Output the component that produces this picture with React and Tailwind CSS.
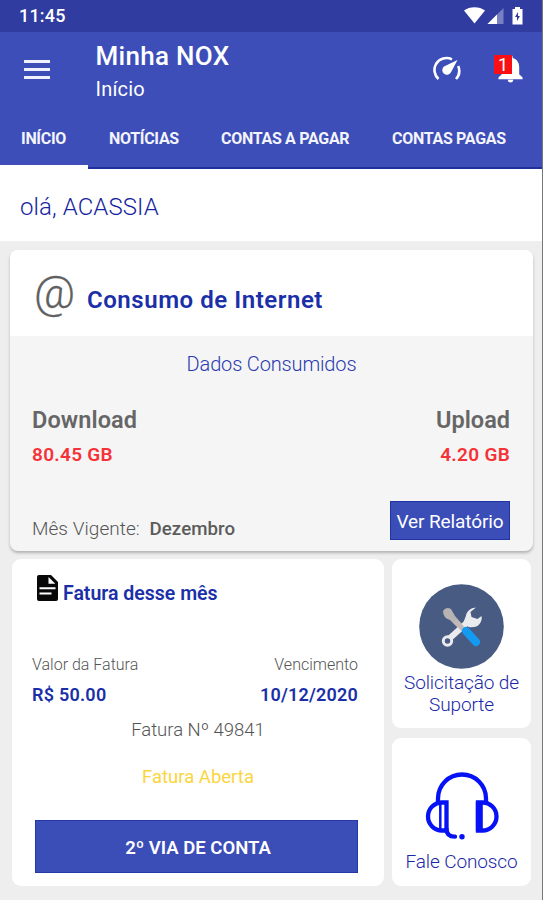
import React from 'react';

const tabs = [
  { label: 'INÍCIO', className: 'w-[88px] pl-[21px]', active: true },
  { label: 'NOTÍCIAS', className: 'w-[111px] pl-[21px]' },
  { label: 'CONTAS A PAGAR', className: 'w-[172px] pl-[22px]' },
  { label: 'CONTAS PAGAS', className: 'w-[171px] pl-[21px]' },
];

const StatusBar = () => (
  <div className="flex h-8 items-center bg-[#303c9f] pl-[19px] text-white">
    <span className="text-[18px] font-medium leading-[34px] tracking-[0.2px]">11:45</span>
    <svg className="ml-auto mr-[18px] h-[18px] w-[60px]" viewBox="0 0 60 18">
      <path d="M0 3.5C5.5-1 15.500-1 21 3.500L10.500 16.500Z" fill="#fff" />
      <path d="M39.500 1v16h-16Z" fill="#7780c2" />
      <path d="M33 7.500V17h-9.500Z" fill="#fff" />
      <path d="M51 0h5v2h2.500v15.500H48.500V2H51Z" fill="#fff" />
      <path d="M54 5l-3 5h2v4l3-5h-2Z" fill="#303c9f" />
    </svg>
  </div>
);

const AppBar = () => (
  <div className="flex h-[76px] text-white">
    <div className="flex w-[95.5px] flex-col gap-[5px] pl-6 pt-[28px]">
      <span className="h-[3px] w-[26px] bg-[#f0f1fa]" />
      <span className="h-[3px] w-[26px] bg-[#f0f1fa]" />
      <span className="h-[3px] w-[26px] bg-[#f0f1fa]" />
    </div>
    <div className="pt-[7px]">
      <h1 className="text-[26px] font-medium leading-[34px] tracking-[0.3px]">Minha NOX</h1>
      <p className="pt-[1px] text-[20px] leading-[30px] tracking-[0.2px]">Início</p>
    </div>
    <svg className="ml-auto mt-[23px] h-[27px] w-[30px]" viewBox="0 0 30 27" fill="none">
      <path d="M6.500 24A12.300 12.300 0 0 1 4 9 12.300 12.300 0 0 1 20 4.300M26.200 11A12.300 12.300 0 0 1 24 24" stroke="#fff" strokeWidth="2.600" />
      <path d="M25.500 5L19 17.300a4.600 4.600 0 1 1-7-5.700Z" fill="#fff" />
    </svg>
    <div className="relative ml-[32px] mr-[19px] mt-[23px] h-[30px] w-[29px]">
      <svg className="absolute left-[4px] top-0 h-[28px] w-[25px]" viewBox="0 0 25 29">
        <path d="M12.500 0c1.300 0 2.200.8 2.200 2v1.200c4.300 1 6.800 4.700 6.800 9.300v7.500l3.500 3.300V25H0v-1.700L3.500 20v-7.500c0-4.600 2.600-8.300 6.800-9.300V2c0-1.200.9-2 2.200-2ZM9.700 25.700h5.600a2.800 2.800 0 0 1-5.600 0Z" fill="#fff" />
      </svg>
      <span className="absolute left-0 top-0 h-[19px] w-[18px] bg-[#fa0f14] text-center text-[18px] leading-[19px]">1</span>
    </div>
  </div>
);

const TabBar = () => (
  <div className="flex h-[61px] text-[16px] font-bold leading-[62px] tracking-[-0.3px] text-[#f3f4fc]">
    {tabs.map((tab) => (
      <div
        key={tab.label}
        className={`${tab.className} flex shrink-0 flex-col whitespace-nowrap border-b-[2px] ${tab.active ? 'border-white' : 'border-[#1e309d]'}`}
      >
        <span className="h-[57px]">{tab.label}</span>
        {tab.active && <span className="-ml-[21px] h-[2px] w-[88px] bg-white" />}
      </div>
    ))}
  </div>
);

const ConsumptionCard = () => (
  <section className="ml-[10px] mt-[9px] h-[301px] w-[523px] overflow-hidden rounded-[8px] bg-[#f5f5f5] shadow-[0_2px_3px_rgba(0,0,0,0.25)]">
    <div className="flex h-[86px] items-center bg-white pl-[24px]">
      <span className="w-[53px] pb-[1px] text-[45px] font-light leading-[60px] text-[#606060] [-webkit-text-stroke:0.3px_#606060]">@</span>
      <h2 className="pt-[13px] text-[24px] font-semibold leading-[30px] tracking-[0.55px] text-[#1a2fa8]">Consumo de Internet</h2>
    </div>
    <p className="pt-[14px] text-center text-[20px] font-light leading-[28px] tracking-[-0.15px] text-[#2a39b0]">Dados Consumidos</p>
    <div className="flex justify-between pl-[22px] pr-[23px] pt-[26px] font-semibold">
      <div>
        <p className="text-[23.5px] leading-[32px] tracking-[0.1px] text-[#666]">Download</p>
        <p className="pt-[3px] text-[19px] leading-[32px] tracking-[0.3px] text-[#f53238]">80.45 GB</p>
      </div>
      <div className="text-right">
        <p className="text-[23.5px] leading-[32px] text-[#666]">Upload</p>
        <p className="pt-[3px] text-[19px] leading-[32px] tracking-[0.3px] text-[#f53238]">4.20 GB</p>
      </div>
    </div>
    <div className="flex justify-between pl-[22px] pr-[23px] pt-[30px] text-[19px]">
      <p className="pt-[12px] font-light leading-[32px] tracking-[0.05px] text-[#555]">
        Mês Vigente: <span className="ml-[5px] text-[18.7px] font-medium text-[#5c5c5c]">Dezembro</span>
      </p>
      <button className="h-[39px] w-[120px] border border-[#2034a4] bg-[#3b4db7] text-[19px] leading-[39px] tracking-[-0.1px] text-white">Ver Relatório</button>
    </div>
  </section>
);

const InvoiceCard = () => (
  <section className="h-[327px] w-[372px] rounded-[9px] bg-white px-[20px]">
    <div className="flex h-[54px] items-start pl-[5px] pt-[16px]">
      <svg className="h-[26px] w-[21px]" viewBox="0 0 21 26">
        <path d="M2 0h12l7 7v17q0 2-2 2H2q-2 0-2-2V2q0-2 2-2Z" fill="#080808" />
        <path d="M11.500 2v6.700h6.800ZM2.500 12.200h16v2h-16Zm0 5.300h12v2h-12Z" fill="#fff" />
      </svg>
      <h2 className="pl-[5px] pt-[4px] text-[19.5px] font-semibold leading-[30px] text-[#1a2fa8]">Fatura desse mês</h2>
    </div>
    <div className="flex justify-between pr-[6px] pt-[37px]">
      <div>
        <p className="text-[16px] font-light leading-[30px] text-[#555]">Valor da Fatura</p>
        <p className="text-[18px] font-semibold leading-[30px] tracking-[0.25px] text-[#1a2fa8]">R$ 50.00</p>
      </div>
      <div className="text-right">
        <p className="text-[16px] font-light leading-[30px] text-[#555]">Vencimento</p>
        <p className="text-[18px] font-semibold leading-[30px] tracking-[0.2px] text-[#1a2fa8]">10/12/2020</p>
      </div>
    </div>
    <p className="pt-[5px] text-center text-[18.5px] font-light leading-[30px] text-[#555]">Fatura Nº 49841</p>
    <p className="pt-[17px] text-center text-[18.5px] leading-[30px] text-[#fbd53c]">Fatura Aberta</p>
    <button className="ml-[3px] mt-[28px] h-[53px] w-[323px] border border-[#2539a6] bg-[#3b4db7] pl-[3px] text-[18.5px] font-semibold leading-[54px] text-white">
      2º VIA DE CONTA
    </button>
  </section>
);

const SupportIcon = () => (
  <svg className="h-[85px] w-[85px]" viewBox="0 0 85 85">
    <circle cx="42.500" cy="42.500" r="42.300" fill="#485b83" />
    <path d="M24 27q3-5 8-2l4 7 7 8-4 4-8-8q-7-2-7-9Z" fill="#b7b3b2" />
    <path d="M31 54L51 36" stroke="#e9ebee" strokeWidth="6" />
    <circle cx="28.500" cy="57" r="4.200" fill="none" stroke="#e9ebee" strokeWidth="3" />
    <path d="M57 23.500Q48 24 46.500 33l-2 5 5 5q8 1 11-3 3-4 2-8l-4 3-6-2-1-5Z" fill="#e9ebee" />
    <path d="M36 37l9 9" stroke="#c3b8b8" strokeWidth="5" />
    <path d="M47 47L57 58" stroke="#149af0" strokeWidth="8" strokeLinecap="round" />
  </svg>
);

const HeadsetIcon = () => (
  <svg className="h-[68px] w-[74px]" viewBox="0 0 74 68" fill="none" stroke="#0612f5" strokeWidth="4.300">
    <path d="M13 30v-3.500a24 24 0 0 1 48 0V30" />
    <path d="M21.500 30.500H17a14 14 0 0 0 0 28h4.500Z" />
    <path d="M15.300 31v27" strokeWidth="2.500" />
    <path d="M53 30.500h4.500a14 14 0 0 1 0 28H53Z" />
    <path d="M54.300 30v29" strokeWidth="7" />
    <path d="M21.500 57c0 5 3 7.700 8.500 7.700" strokeLinecap="round" />
    <circle cx="37" cy="64.700" r="2.700" fill="#0612f5" stroke="none" />
  </svg>
);

export default function App() {
  return (
    <div className="h-[900px] w-[543px] overflow-hidden border-r border-[#777] bg-[#eee] font-['Roboto',sans-serif]">
      <StatusBar />
      <header className="h-[137px] overflow-hidden bg-[#3d4eb8]">
        <AppBar />
        <TabBar />
      </header>
      <p className="h-[72px] bg-white pl-[20px] text-[24px] font-light leading-[76px] tracking-[0.1px] text-[#16249f]">olá, ACASSIA</p>
      <ConsumptionCard />
      <div className="mt-[8px] flex gap-[8px] pl-[12px]">
        <InvoiceCard />
        <div className="flex w-[139px] flex-col gap-[10px] text-center text-[19px] font-light tracking-[-0.1px] text-[#1a28a8]">
          <section className="flex h-[169px] flex-col items-center rounded-[9px] bg-white pt-[25px]">
            <SupportIcon />
            <p className="pt-[3px] leading-[22px]">Solicitação de<br />Suporte</p>
          </section>
          <section className="flex h-[148px] flex-col items-center rounded-[9px] bg-white pt-[34px]">
            <HeadsetIcon />
            <p className="pt-[11px] leading-[22px]">Fale Conosco</p>
          </section>
        </div>
      </div>
    </div>
  );
}
